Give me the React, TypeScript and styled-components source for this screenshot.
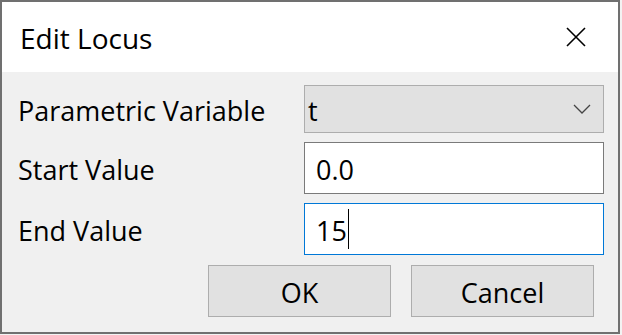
import styled, { createGlobalStyle } from 'styled-components';

const GlobalStyle = createGlobalStyle`
  html, body {
    margin: 0;
    padding: 0;
    background: #f3f3f3;
  }
  body {
    font-family: "Open Sans", "Noto Sans", sans-serif;
    color: #000;
  }
`;

const App = () => {
  return (
    <>
      <GlobalStyle />
      <Window>
        <TitleBar>
          <Title>Edit Locus</Title>
          <CloseButton>
            <svg width="20" height="20" viewBox="0 0 20 20">
              <path d="M1 1 L19 19 M19 1 L1 19" stroke="#000" strokeWidth="1.6" fill="none" />
            </svg>
          </CloseButton>
        </TitleBar>
        <Body>
          <Form>
            <Label>Parametric Variable</Label>
            <Select>
              <FieldText>t</FieldText>
              <svg width="18" height="10" viewBox="0 0 18 10">
                <path d="M1 1 L9 9 L17 1" stroke="#444" strokeWidth="1.3" fill="none" />
              </svg>
            </Select>
            <Label>Start Value</Label>
            <Field>
              <FieldText>0.0</FieldText>
            </Field>
            <Label>End Value</Label>
            <Field focused>
              <FieldText>15</FieldText>
              <Caret />
            </Field>
          </Form>
          <Footer>
            <Button>OK</Button>
            <Button>Cancel</Button>
          </Footer>
        </Body>
      </Window>
    </>
  );
};

const Window = styled.div`
  width: 620px;
  height: 334px;
  box-sizing: border-box;
  border: 2px solid #707070;
  background: #f0f0f0;
  display: flex;
  flex-direction: column;
`;

const TitleBar = styled.div`
  height: 70px;
  background: #fff;
  display: flex;
  align-items: center;
  justify-content: space-between;
  padding: 0 32px 0 18px;
`;

const Title = styled.div`
  font-size: 28px;
  line-height: 1;
  margin-top: 2px;
`;

const CloseButton = styled.div`
  width: 20px;
  height: 20px;
  display: flex;
`;

const Body = styled.div`
  flex: 1;
  display: flex;
  flex-direction: column;
  padding: 13px 14px 0 16px;
`;

const Form = styled.div`
  display: grid;
  grid-template-columns: 286px 300px;
  grid-template-rows: 48px 52px 52px;
  row-gap: 9px;
`;

const Label = styled.div`
  font-size: 27px;
  display: flex;
  align-items: center;
  padding-top: 2px;
`;

const Select = styled.div`
  box-sizing: border-box;
  background: #e1e1e1;
  border: 1px solid #adadad;
  display: flex;
  align-items: center;
  justify-content: space-between;
  padding: 0 12px 0 3px;
`;

const Field = styled.div<{ focused?: boolean }>`
  box-sizing: border-box;
  background: #fff;
  border: 1px solid ${(p) => (p.focused ? '#0078d7' : '#7a7a7a')};
  display: flex;
  align-items: center;
  padding-left: 11px;
`;

const FieldText = styled.span`
  font-size: 27px;
  padding-top: 2px;
`;

const Caret = styled.span`
  width: 1px;
  height: 40px;
  background: #000;
  margin-left: 1px;
`;

const Footer = styled.div`
  display: flex;
  justify-content: flex-end;
  gap: 20px;
  margin-top: 10px;
  padding-right: 10px;
`;

const Button = styled.div`
  box-sizing: border-box;
  width: 183px;
  height: 52px;
  background: #e1e1e1;
  border: 1px solid #adadad;
  display: flex;
  align-items: center;
  justify-content: center;
  font-size: 27px;
  padding-top: 2px;
`;

export default App;
